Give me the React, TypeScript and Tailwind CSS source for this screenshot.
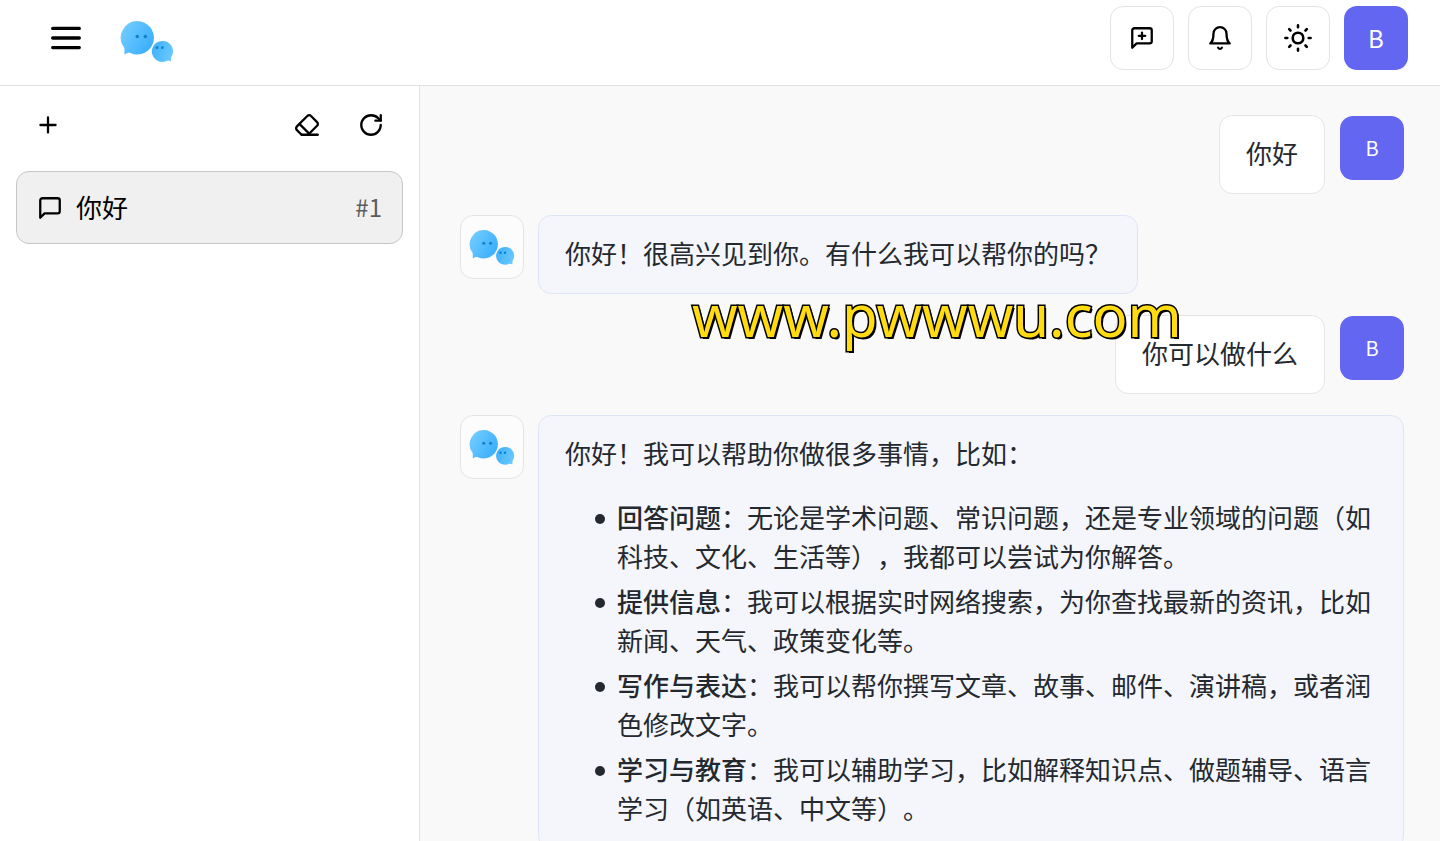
import { useState } from "react";
import type { ReactNode } from "react";

interface Chat {
  id: number;
  title: string;
}

interface Topic {
  name: string;
  text: string;
}

interface Message {
  id: number;
  role: "user" | "bot";
  text: string;
  topics?: Topic[];
}

const CHATS: Chat[] = [{ id: 1, title: "你好" }];

const MESSAGES: Message[] = [
  { id: 1, role: "user", text: "你好" },
  { id: 2, role: "bot", text: "你好！很高兴见到你。有什么我可以帮你的吗？" },
  { id: 3, role: "user", text: "你可以做什么" },
  {
    id: 4,
    role: "bot",
    text: "你好！我可以帮助你做很多事情，比如：",
    topics: [
      { name: "回答问题", text: "：无论是学术问题、常识问题，还是专业领域的问题（如科技、文化、生活等），我都可以尝试为你解答。" },
      { name: "提供信息", text: "：我可以根据实时网络搜索，为你查找最新的资讯，比如新闻、天气、政策变化等。" },
      { name: "写作与表达", text: "：我可以帮你撰写文章、故事、邮件、演讲稿，或者润色修改文字。" },
      { name: "学习与教育", text: "：我可以辅助学习，比如解释知识点、做题辅导、语言学习（如英语、中文等）。" },
    ],
  },
];

function Icon({ children }: { children: ReactNode }) {
  return (
    <svg
      viewBox="0 0 24 24"
      className="w-[26px] h-[26px] shrink-0"
      fill="none"
      stroke="currentColor"
      strokeWidth="2.1"
      strokeLinecap="round"
      strokeLinejoin="round"
      aria-hidden="true"
    >
      {children}
    </svg>
  );
}

function MenuIcon() {
  return (
    <svg viewBox="0 0 32 32" className="w-8 h-8" stroke="currentColor" strokeWidth="3.3" strokeLinecap="round" aria-hidden="true">
      <path d="M2.7 6.4h26.6M2.7 16h26.6M2.7 25.6h26.6" />
    </svg>
  );
}

function SunIcon() {
  return (
    <svg
      viewBox="0 0 28 28"
      className="w-7 h-7"
      fill="none"
      stroke="currentColor"
      strokeWidth="2.6"
      strokeLinecap="round"
      aria-hidden="true"
    >
      <circle cx="14" cy="14" r="5.3" />
      <path d="M14 1.4v1.9M14 24.7v1.9M1.4 14h1.9M24.7 14h1.9M5.2 5.2l1.3 1.3M21.5 21.5l1.3 1.3M5.2 22.8l1.3-1.3M21.5 6.5l1.3-1.3" />
    </svg>
  );
}

function Logo({ id, className }: { id: string; className: string }) {
  return (
    <svg viewBox="0 0 54 42" className={className} role="img" aria-label="Logo">
      <defs>
        <linearGradient id={`${id}-big`} x1="0" y1="0.2" x2="1" y2="0.8">
          <stop offset="0" stopColor="#74cdfd" />
          <stop offset="1" stopColor="#36adfd" />
        </linearGradient>
        <linearGradient id={`${id}-small`} x1="0" y1="0.3" x2="1" y2="0.7">
          <stop offset="0" stopColor="#3fb1fb" />
          <stop offset="1" stopColor="#6cc9fd" />
        </linearGradient>
      </defs>
      <path
        d="M17.3 1a16.7 16.7 0 1 1-7 31.9c-1.8-.3-3.6.4-5.8 1.5-.3-2.5.3-4.6-.4-6.7A16.7 16.7 0 0 1 17.3 1z"
        fill={`url(#${id}-big)`}
      />
      <path
        d="M42.4 20.9a10.5 10.5 0 0 1 8.9 16.2c-.5 1.5-.2 2.8-.4 4.3-1.4-.7-2.6-1-3.7-.7a10.5 10.5 0 1 1-4.8-19.8z"
        fill={`url(#${id}-small)`}
      />
      <g fill="#1480c8">
        <circle cx="17.3" cy="16.5" r="1.8" />
        <circle cx="25.3" cy="16.5" r="1.8" />
        <circle cx="37" cy="27.7" r="1.4" />
        <circle cx="42.3" cy="27.7" r="1.4" />
      </g>
    </svg>
  );
}

function HeaderButton({ label, children }: { label: string; children: ReactNode }) {
  return (
    <button
      type="button"
      aria-label={label}
      className="flex items-center justify-center w-16 h-16 rounded-[13px] border border-[#e4e4e4] bg-white text-black hover:bg-gray-50"
    >
      {children}
    </button>
  );
}

function MessageRow({ message }: { message: Message }) {
  if (message.role === "user") {
    return (
      <div className="flex justify-end items-start gap-[15px]">
        <div className="rounded-[13px] border border-[#e4e4e4] bg-white px-[26px] pt-[17px] pb-[21px]">
          <p>{message.text}</p>
        </div>
        <div className="flex items-center justify-center shrink-0 w-16 h-16 mt-px rounded-[13px] bg-[#6366f1] text-xl text-white">B</div>
      </div>
    );
  }

  return (
    <div className="flex items-start gap-[14px]">
      <div className="flex items-center justify-center shrink-0 w-16 h-16 rounded-[13px] border border-[#e4e4e4] bg-[#fcfcfc]">
        <Logo id={`bot-${message.id}`} className="w-[46px] h-9" />
      </div>
      <div className="rounded-[13px] border border-[#dde6f6] bg-[#f4f6fb] px-[26px] pt-[17px] pb-[21px]">
        <p>{message.text}</p>
        {message.topics && (
          <ul className="mt-[25px] pl-[52px] space-y-1.5">
            {message.topics.map((topic) => (
              <li
                key={topic.name}
                className="before:inline-block before:w-2.5 before:h-2.5 before:-ml-[22px] before:mr-3 before:mb-1 before:align-middle before:rounded-full before:bg-current"
              >
                <strong className="font-medium">{topic.name}</strong>
                {topic.text}
              </li>
            ))}
          </ul>
        )}
      </div>
    </div>
  );
}

export default function App() {
  const [sidebarOpen, setSidebarOpen] = useState(true);
  const [activeChat, setActiveChat] = useState(1);

  return (
    <div
      lang="zh-CN"
      className="flex flex-col h-screen overflow-hidden bg-white text-black font-['Noto_Sans_CJK_SC',sans-serif] [text-spacing-trim:space-all]"
    >
      <header className="flex items-center justify-between shrink-0 pl-[34px] pr-8 pt-1.5 pb-[15px] border-b border-[#e2e2e2]">
        <div className="flex items-center gap-[22px]">
          <button
            type="button"
            aria-label="菜单"
            onClick={() => setSidebarOpen((open) => !open)}
            className="flex items-center justify-center w-16 h-16"
          >
            <MenuIcon />
          </button>
          <Logo id="brand" className="w-[54px] h-[42px] mt-1.5" />
        </div>
        <div className="flex items-center gap-[14px]">
          <HeaderButton label="新对话">
            <Icon>
              <path d="M21 15a2 2 0 0 1-2 2H7l-4 4V5a2 2 0 0 1 2-2h14a2 2 0 0 1 2 2z" />
              <path d="M12 7v6M9 10h6" />
            </Icon>
          </HeaderButton>
          <HeaderButton label="通知">
            <Icon>
              <path d="M18 8A6 6 0 0 0 6 8c0 7-3 9-3 9h18s-3-2-3-9" />
              <path d="M13.73 21a2 2 0 0 1-3.46 0" />
            </Icon>
          </HeaderButton>
          <HeaderButton label="主题">
            <SunIcon />
          </HeaderButton>
          <button type="button" className="flex items-center justify-center w-16 h-16 rounded-[13px] bg-[#6366f1] text-2xl text-white">
            B
          </button>
        </div>
      </header>

      <div className="flex flex-1 min-h-0">
        {sidebarOpen && (
          <aside className="w-[420px] shrink-0 px-4 pt-[7px] border-r border-[#e2e2e2] bg-white">
            <div className="flex items-center">
              <button type="button" aria-label="新建" className="flex items-center justify-center w-16 h-16 mr-auto">
                <Icon>
                  <path d="M12 5v14M5 12h14" />
                </Icon>
              </button>
              <button type="button" aria-label="清空" className="flex items-center justify-center w-16 h-16">
                <Icon>
                  <path d="m7 21-4.3-4.3c-1-1-1-2.5 0-3.4l9.6-9.6c1-1 2.5-1 3.4 0l5.6 5.6c1 1 1 2.5 0 3.4L13 21" />
                  <path d="M22 21H7M5 11l9 9" />
                </Icon>
              </button>
              <button type="button" aria-label="刷新" className="flex items-center justify-center w-16 h-16">
                <Icon>
                  <path d="M21 12a9 9 0 1 1-9-9c2.52 0 4.93 1 6.74 2.74L21 8" />
                  <path d="M21 3v5h-5" />
                </Icon>
              </button>
            </div>

            <nav className="mt-[14px] space-y-2">
              {CHATS.map((chat) => (
                <button
                  key={chat.id}
                  type="button"
                  onClick={() => setActiveChat(chat.id)}
                  className={`flex items-center gap-[13px] w-full px-5 py-[15px] rounded-[13px] border text-left ${
                    chat.id === activeChat ? "border-[#c6c6c6] bg-[#f0f0f0]" : "border-transparent hover:bg-gray-50"
                  }`}
                >
                  <Icon>
                    <path d="M21 15a2 2 0 0 1-2 2H7l-4 4V5a2 2 0 0 1 2-2h14a2 2 0 0 1 2 2z" />
                  </Icon>
                  <span className="flex-1 pb-0.5 text-[26px] leading-[39px]">{chat.title}</span>
                  <span className="pb-0.5 text-2xl text-[#5c5c5c]">#{chat.id}</span>
                </button>
              ))}
            </nav>
          </aside>
        )}

        <main className="relative flex-1 min-w-0 bg-[#f9f9f9]">
          <div className="flex flex-col gap-[21px] h-full overflow-y-auto [scrollbar-width:none] pt-[29px] pb-5 pl-10 pr-9 text-[26px] leading-[39px] text-[#24292f]">
            {MESSAGES.map((message) => (
              <MessageRow key={message.id} message={message} />
            ))}
          </div>
          <span className="absolute left-[272px] top-[190px] font-['Noto_Sans',sans-serif] text-[58px] leading-[78px] text-[#ffdb0f] [-webkit-text-stroke:3px_#000] [paint-order:stroke_fill] [text-shadow:2px_2px_0_#000] pointer-events-none">
            www.pwwwu.com
          </span>
        </main>
      </div>
    </div>
  );
}
